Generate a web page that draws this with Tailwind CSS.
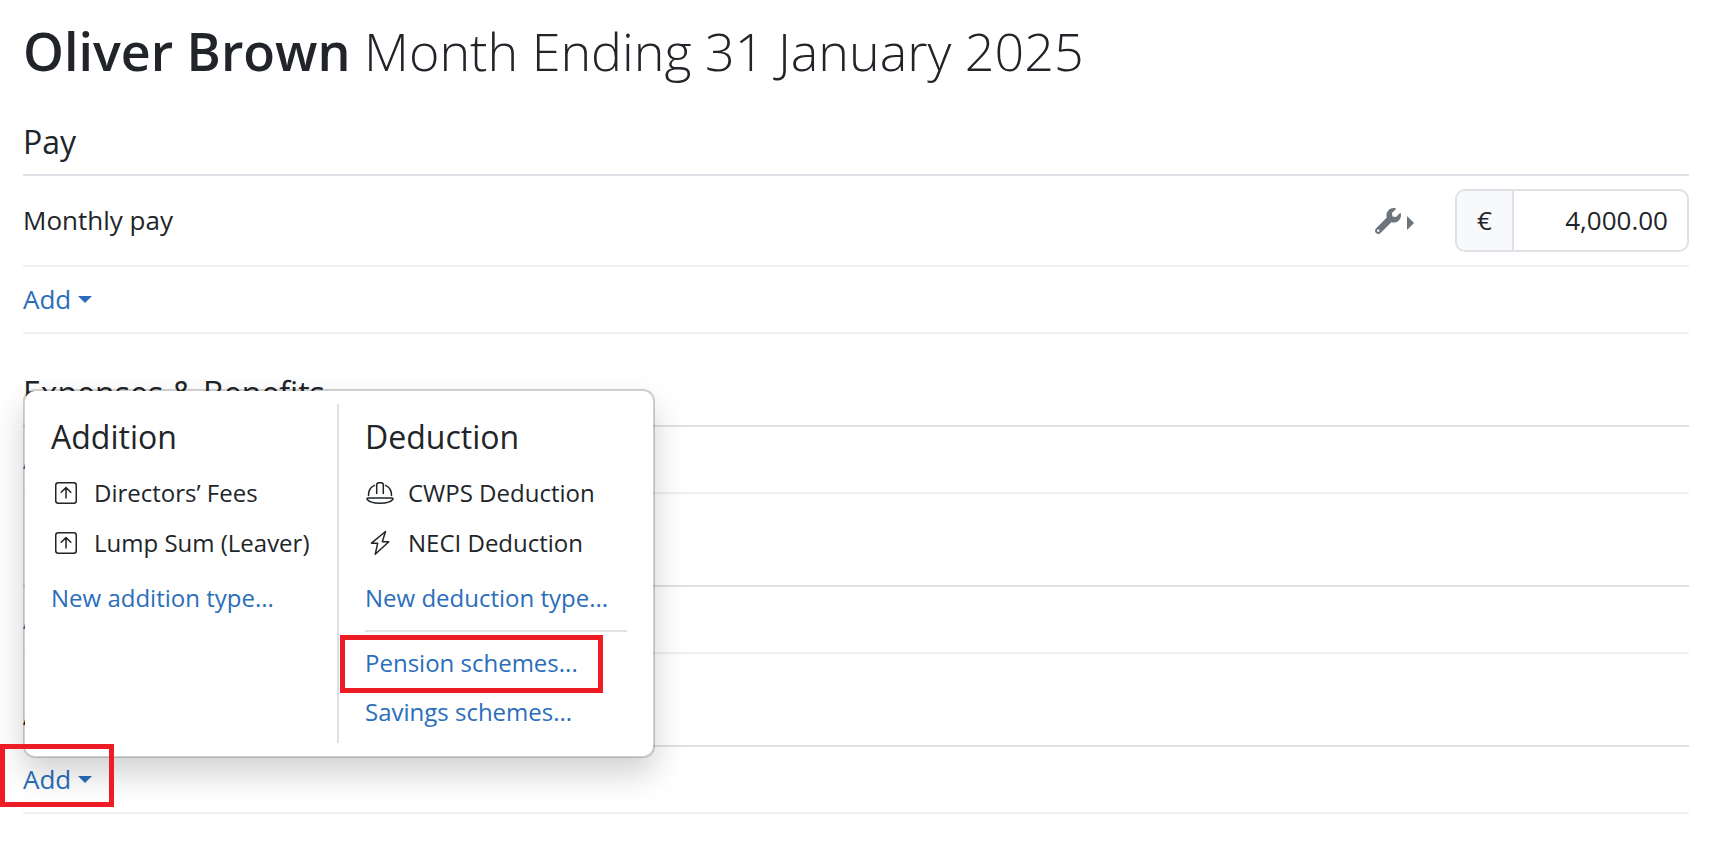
<!DOCTYPE html>
<html lang="en">
<head>
  <meta charset="UTF-8" />
  <meta name="viewport" content="width=device-width, initial-scale=1.0" />
  <title>Oliver Brown - Month Ending 31 January 2025</title>
  <script src="https://cdn.jsdelivr.net/npm/@tailwindcss/browser@4"></script>
</head>
<body class="bg-white text-[#212529] font-['Open_Sans','Noto_Sans',sans-serif] text-[26px] leading-[39px]">

  <main class="pt-5 pl-[23px] pr-[25px] pb-10">
    <h1 class="pb-px text-[52px] leading-[62px] font-light"><strong class="font-semibold">Oliver Brown</strong> Month Ending 31 January 2025</h1>

    <!-- Pay -->
    <section>
      <h2 class="mt-10 pb-[13px] text-[32px] leading-[38px] border-b-2 border-[#dee2e6]">Pay</h2>
      <div class="flex items-center py-[13px] border-b-2 border-[#efefef]">
        <label for="monthlyPay" class="grow">Monthly pay</label>
        <button type="button" aria-label="Pay options" class="flex items-center gap-[6px] mr-[41px] text-[#6c757d]">
          <svg class="size-[26px]" viewBox="0 0 512 512" fill="currentColor"><path d="M507.73 109.1c-2.24-9.03-13.54-12.09-20.12-5.51l-74.36 74.36-67.88-11.31-11.31-67.88 74.36-74.36c6.62-6.62 3.43-17.9-5.66-20.16-47.38-11.74-99.55.91-136.58 37.93-39.64 39.64-50.55 97.1-34.05 147.2L18.74 402.76c-24.99 24.99-24.99 65.51 0 90.5 24.99 24.99 65.51 24.99 90.5 0l213.21-213.21c50.12 16.71 107.47 5.68 147.37-34.22 37.07-37.07 49.7-89.32 37.91-136.73zM64 472c-13.25 0-24-10.75-24-24 0-13.26 10.75-24 24-24s24 10.74 24 24c0 13.25-10.75 24-24 24z"/></svg>
          <svg class="w-[7px] h-[14px] mt-1" viewBox="0 0 7 14" fill="currentColor"><path d="M0 0l7 7-7 7z"/></svg>
        </button>
        <div class="flex w-[234px] h-[63px] border-2 border-[#dee2e6] rounded-[10px] overflow-hidden">
          <span class="flex items-center justify-center shrink-0 w-[57px] bg-[#f8f9fa] border-r-2 border-[#dee2e6]">€</span>
          <input id="monthlyPay" type="text" value="4,000.00" class="grow min-w-0 px-[19px] text-right outline-none" />
        </div>
      </div>
      <div class="flex py-[13px] border-b-2 border-[#efefef]">
        <button type="button" class="flex items-center gap-[7px] text-[#2a6ebb]">Add
          <svg class="w-[14px] h-[7px]" viewBox="0 0 14 7" fill="currentColor"><path d="M0 0h14L7 7z"/></svg>
        </button>
      </div>
    </section>

    <!-- Expenses & Benefits -->
    <section>
      <h2 class="mt-10 pb-[13px] text-[32px] leading-[38px] border-b-2 border-[#dee2e6]">Expenses &amp; Benefits</h2>
      <div class="flex py-[13px] border-b-2 border-[#efefef]">
        <button type="button" class="flex items-center gap-[7px] text-[#2a6ebb]">Add
          <svg class="w-[14px] h-[7px]" viewBox="0 0 14 7" fill="currentColor"><path d="M0 0h14L7 7z"/></svg>
        </button>
      </div>
    </section>

    <!-- Leave -->
    <section>
      <h2 class="mt-10 pb-[13px] text-[32px] leading-[38px] border-b-2 border-[#dee2e6]">Leave</h2>
      <div class="flex py-[13px] border-b-2 border-[#efefef]">
        <button type="button" class="flex items-center gap-[7px] text-[#2a6ebb]">Add
          <svg class="w-[14px] h-[7px]" viewBox="0 0 14 7" fill="currentColor"><path d="M0 0h14L7 7z"/></svg>
        </button>
      </div>
    </section>

    <!-- Additions & Deductions -->
    <section>
      <h2 class="mt-10 pb-[13px] text-[32px] leading-[38px] border-b-2 border-[#dee2e6]">Additions &amp; Deductions</h2>
      <div class="flex py-[13px] border-b-2 border-[#efefef]">
        <div class="relative">
          <button type="button" class="flex items-center gap-[7px] text-[#2a6ebb]" aria-expanded="true">Add
            <svg class="w-[14px] h-[7px]" viewBox="0 0 14 7" fill="currentColor"><path d="M0 0h14L7 7z"/></svg>
          </button>

          <!-- Dropdown menu -->
          <div class="absolute left-0 bottom-full mb-[2px] flex min-w-[632px] py-[13px] bg-white bg-clip-padding border-2 border-black/18 rounded-xl shadow-[0_16px_32px_rgba(0,0,0,0.18)] text-2xl leading-9 whitespace-nowrap">
            <div class="min-w-[312px] pt-[14px] px-[26px]">
              <h3 class="mb-3 text-[32px] leading-[38px]">Addition</h3>
              <button type="button" class="flex items-center gap-[13px] py-[7px] leading-9">
                <svg class="w-[30px] h-[22px]" viewBox="0 0 30 22" fill="none" stroke="currentColor" stroke-width="1.5" stroke-linecap="round" stroke-linejoin="round"><rect x="4.75" y=".75" width="20.5" height="20.5" rx="2.5"/><path d="M15 16V6M10.2 10.2L15 5.6l4.8 4.6"/></svg>
                Directors’ Fees
              </button>
              <button type="button" class="flex items-center gap-[13px] py-[7px] leading-9">
                <svg class="w-[30px] h-[22px]" viewBox="0 0 30 22" fill="none" stroke="currentColor" stroke-width="1.5" stroke-linecap="round" stroke-linejoin="round"><rect x="4.75" y=".75" width="20.5" height="20.5" rx="2.5"/><path d="M15 16V6M10.2 10.2L15 5.6l4.8 4.6"/></svg>
                Lump Sum (Leaver)
              </button>
              <a href="#" class="block mt-1 pt-2 pb-[6px] leading-[35px] text-[#2a6ebb]">New addition type...</a>
            </div>
            <div class="grow pt-[14px] pb-2 px-[26px] border-l-2 border-[#dee2e6]">
              <h3 class="mb-3 text-[32px] leading-[38px]">Deduction</h3>
              <button type="button" class="flex items-center gap-[13px] py-[7px] leading-9">
                <svg class="w-[30px] h-[22px]" viewBox="0 0 30 22" fill="none" stroke="currentColor" stroke-width="1.5" stroke-linecap="round" stroke-linejoin="round"><path d="M11.7 11.5V3q0-2.25 2.2-2.25h2.2q2.2 0 2.2 2.25v8.500M3.5 13.5C3.4 8.5 5.500 5 9.5 3.4M26.5 13.5C26.6 8.5 24.5 5 20.5 3.4M3 16h24q1.2 0 1 1.2C26.5 19.8 21 21.25 15 21.25S3.5 19.8 2 17.2Q1.8 16 3 16z"/></svg>
                CWPS Deduction
              </button>
              <button type="button" class="flex items-center gap-[13px] py-[7px] leading-9">
                <svg class="w-[30px] h-[26px]" viewBox="0 0 30 26" fill="none" stroke="currentColor" stroke-width="1.5" stroke-linecap="round" stroke-linejoin="round"><path d="M20.5 1.5L6.5 13.2h6.2L10.2 24.3 23.8 11.8h-6.5z"/></svg>
                NECI Deduction
              </button>
              <a href="#" class="block mt-1 pt-2 pb-[6px] leading-[35px] text-[#2a6ebb]">New deduction type...</a>
              <hr class="mt-[9px] mb-[5px] border-t-2 border-[#e2e2e2]" />
              <a href="#" class="relative block pt-2 pb-[6px] leading-[35px] text-[#2a6ebb]">Pension schemes...
                <span class="absolute -left-[25px] -top-[2px] w-[263px] h-[58px] border-5 border-[#ee1c25]"></span>
              </a>
              <a href="#" class="block pt-2 pb-[6px] leading-[35px] text-[#2a6ebb]">Savings schemes...</a>
            </div>
          </div>

          <!-- Highlight around the open Add button -->
          <span class="absolute -left-[23px] -top-4 w-[114px] h-[63px] border-5 border-[#ee1c25] pointer-events-none"></span>
        </div>
      </div>
    </section>
  </main>

</body>
</html>
